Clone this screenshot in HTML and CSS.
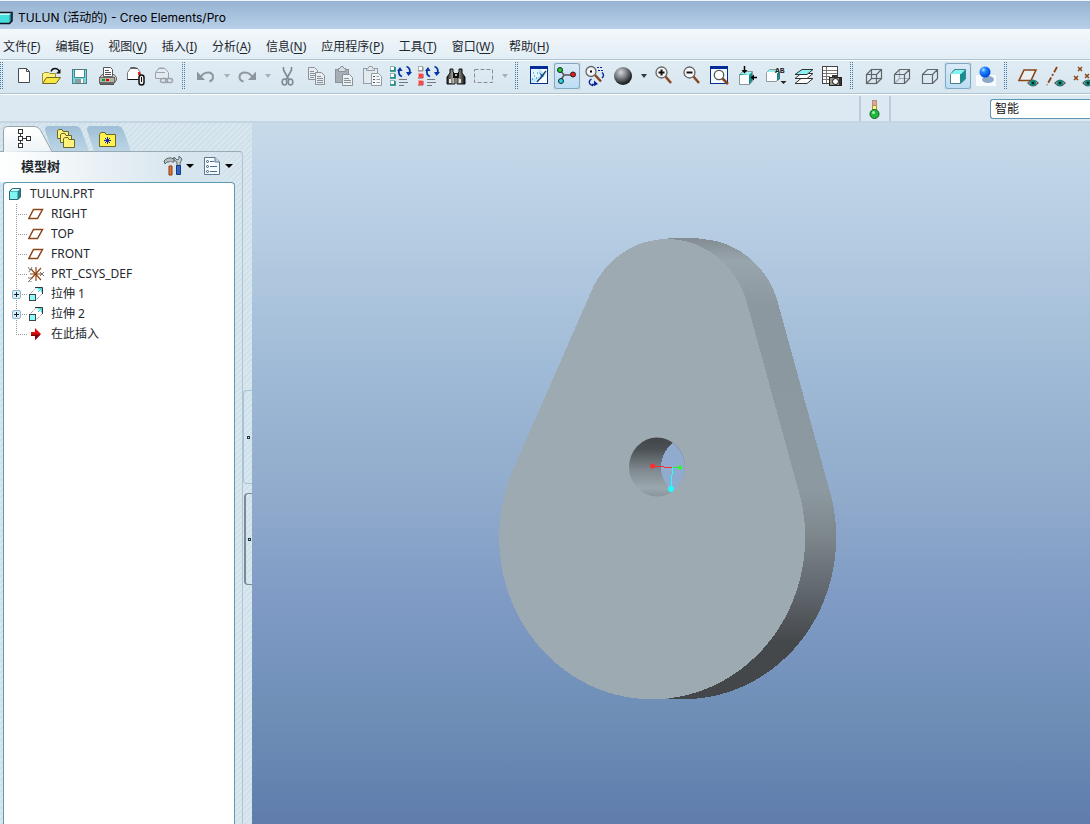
FILE: index.html
```html
<!DOCTYPE html>
<html lang="zh-CN">
<head>
<meta charset="utf-8">
<title>TULUN (活动的) - Creo Elements/Pro</title>
<link rel="stylesheet" href="styles.css">
</head>
<body>
<svg class="defs" width="0" height="0" aria-hidden="true">
  <defs>
    <radialGradient id="ball" cx=".38" cy=".3" r=".65"><stop offset="0" stop-color="#d4d7da"/><stop offset=".5" stop-color="#7c8186"/><stop offset="1" stop-color="#1d2023"/></radialGradient>
    <radialGradient id="blueball" cx=".35" cy=".3" r=".7"><stop offset="0" stop-color="#b9dcff"/><stop offset=".35" stop-color="#1c86ff"/><stop offset="1" stop-color="#0045d8"/></radialGradient>
    <linearGradient id="barrel"><stop offset="0" stop-color="#222"/><stop offset=".45" stop-color="#d8d8cc"/><stop offset="1" stop-color="#111"/></linearGradient>
    <linearGradient id="tabOn" x2="0" y2="1"><stop offset="0" stop-color="#fff"/><stop offset="1" stop-color="#edf3f7"/></linearGradient>
    <linearGradient id="tabOff" x2="0" y2="1"><stop offset="0" stop-color="#9fbfd7"/><stop offset="1" stop-color="#bcd5e5"/></linearGradient>
    <symbol id="eye" viewBox="0 0 12 8"><path d="M0 4Q6-3 12 4Q6 11 0 4" fill="#56605c"/><path d="M2 4Q6 0 10 4Q6 8 2 4" fill="#d7e8e4"/><circle cx="6" cy="4" r="3" fill="#078a80"/><circle cx="6" cy="4" r="1.3" fill="#00201e"/></symbol>
    <symbol id="plane" viewBox="0 0 16 12"><path d="M5.500 1.500H14.500L9.500 10.500H.8Z" fill="#fff" stroke="#8a4519" stroke-width="1.500"/></symbol>
    <symbol id="extrude" viewBox="0 0 16 16"><path d="M1.500 8.500L7.500 2.500M7.500 14.500L14.500 7.500" stroke="#777" stroke-dasharray="1 1" fill="none"/><path d="M7 2L10 1H14V7" fill="#b9fafa"/><path d="M7 1.500H14.500V8" fill="none" stroke="#333"/><path d="M10 6L13 3M10 2.500H13.500V6" fill="none" stroke="#48d5d5"/><rect x="1.500" y="8.500" width="6" height="6" fill="#8ff" stroke="#444"/></symbol>
    <symbol id="regen" viewBox="0 0 28 28"><path d="M16 14.500Q12 13 13 8M20.500 4.500Q25 6 23.500 12" fill="none" stroke="#0732a5" stroke-width="1.800"/><path d="M11 9L14 5L16.500 9ZM20 10L26 10L22.500 14Z" fill="#0732a5"/><path d="M13 17.500H21M13 20.500H22M13 23.500H18" stroke="#74797d"/></symbol>
    <symbol id="part" viewBox="0 0 14 14"><path d="M1 4L4 1H13V10L10 13H1Z" fill="#247f87"/><path d="M1 4L4 1H13L10 4Z" fill="#c9ffff"/><rect x="1.500" y="4.500" width="8" height="8" fill="#80f5f5"/><path d="M1.500 4.500L4.500 1.500H12.500V9.500L9.500 12.500H1.500Z" fill="none" stroke="#34676d"/></symbol>
  </defs>
</svg>

<header class="title">
  <svg class="title-icon" width="14" height="14"><path d="M-3 4L0 1H12V10L9 13H-3Z" fill="#43dede"/><path d="M-3 4L0 1H12L9 4Z" fill="#c8ffff"/><path d="M9.500 4L12 1.500V10L9.500 12.500Z" fill="#20868d"/><path d="M-1 1.500H12V10L9.500 12.500H-1" fill="none" stroke="#112" stroke-width="1.500"/></svg>
  <h1>TULUN (活动的) - Creo Elements/Pro</h1>
</header>

<nav class="menu" aria-label="菜单">
  <button>文件(<u>F</u>)</button>
  <button>编辑(<u>E</u>)</button>
  <button>视图(<u>V</u>)</button>
  <button>插入(<u>I</u>)</button>
  <button>分析(<u>A</u>)</button>
  <button>信息(<u>N</u>)</button>
  <button>应用程序(<u>P</u>)</button>
  <button>工具(<u>T</u>)</button>
  <button>窗口(<u>W</u>)</button>
  <button>帮助(<u>H</u>)</button>
</nav>

<div class="toolbar" role="toolbar" aria-label="工具栏">
  <span class="grip first"></span>
  <button class="tool" aria-label="新建"><svg viewBox="0 0 28 28"><path d="M8.500 6.500H16.500L19.500 9.500V20.500H8.500Z" fill="#fff" stroke="#454b50"/><path d="M16.500 6.500V9.500H19.500" fill="none" stroke="#454b50"/></svg></button>
  <button class="tool" aria-label="打开"><svg viewBox="0 0 28 28"><path d="M4.500 20.500V11.500H5.500L6.500 10.500H10.500L11.500 11.500H17.500V15" fill="#fff27c" stroke="#9b8d3a"/><path d="M4.500 21.500L8.500 15.500H22.500L18 21.500Z" fill="#f8e641" stroke="#6f6526"/><path d="M13 9.500Q14 6.500 17 6.500Q20 6.500 21 9" fill="none" stroke="#111" stroke-width="1.400"/><path d="M18 11.500H22.500V7Z" fill="#111"/></svg></button>
  <button class="tool" aria-label="保存"><svg viewBox="0 0 28 28"><rect x="6.500" y="7.500" width="14" height="14" fill="#6ddbe0" stroke="#4b8186"/><rect x="9" y="8" width="9" height="7" fill="#fff"/><path d="M8.500 8V15.500H18.500V8" fill="none" stroke="#49858a"/><rect x="9" y="17" width="9" height="4" fill="#8d9ba1"/><rect x="15" y="17" width="2" height="4" fill="#fff"/></svg></button>
  <button class="tool" aria-label="打印"><svg viewBox="0 0 28 28"><path d="M9.500 15V5.500H16.500L18.500 7.500V15" fill="#fff" stroke="#555"/><path d="M11 8.500H15M11 10.500H17M11 12.500H17" stroke="#555"/><path d="M5.500 15.500L8 12.500H9.500V14.500H18.500V12.500H20L22.500 15.500V18L20 21.500H5.500Z" fill="#c7c7b8" stroke="#666"/><rect x="5.500" y="15.500" width="15" height="5" fill="#b3b4a6" stroke="#666"/><rect x="8" y="17" width="3" height="2" fill="#0a9a2b"/><rect x="12" y="17" width="3" height="2" fill="#e00"/><path d="M6 22.500H20" stroke="#555"/></svg></button>
  <button class="tool" aria-label="作为附件发送"><svg viewBox="0 0 28 28"><path d="M5.500 10.500L8.500 6.500H15.500L18.500 10.500V17.500H5.500Z" fill="#fff" stroke="#777"/><path d="M8 6Q12 5 15.500 6.500" fill="none" stroke="#333"/><path d="M5.500 17.500H16" stroke="#111"/><rect x="16" y="10" width="2" height="3" fill="#e22"/><rect x="17" y="13" width="5" height="10" rx="2.500" fill="#eee" stroke="#111" stroke-width="1.500"/><path d="M19.500 15V20" stroke="#111"/></svg></button>
  <button class="tool" aria-label="作为链接发送"><svg viewBox="0 0 28 28" fill="none" stroke="#9ba4ab"><path d="M5.500 16.500V10.500L8.500 6.500H15L18.500 10.500V16.500Z" fill="#e3eaef"/><path d="M6 10.500H15M8 6.500Q12 5 15 6.500"/><rect x="10.500" y="16.500" width="7" height="4" rx="2" stroke-width="1.500"/><rect x="15.500" y="16.500" width="7" height="4" rx="2" stroke-width="1.500"/></svg></button>
  <span class="grip"></span>
  <button class="tool" aria-label="撤消"><svg viewBox="0 0 28 28"><path d="M8 16Q11 10.500 16 10.500Q21 10.500 21 15Q21 18.500 17.500 19.500" fill="none" stroke="#90989e" stroke-width="2"/><path d="M5 9.500V18H13Z" fill="#8c959b"/></svg></button>
  <button class="drop off" aria-label="撤消列表"></button>
  <button class="tool" aria-label="重做"><svg viewBox="0 0 28 28"><path d="M20 16Q17 10.500 12 10.500Q6.500 10.500 6.500 15Q6.500 18.500 10.500 19.500" fill="none" stroke="#90989e" stroke-width="2"/><path d="M23 9.500V18H15Z" fill="#8c959b"/></svg></button>
  <button class="drop off" aria-label="重做列表"></button>
  <button class="tool" aria-label="剪切"><svg viewBox="0 0 28 28" fill="none" stroke="#81898f" stroke-width="1.600"><path d="M9.500 5V8L15 18M17.500 5V8L12 18"/><ellipse cx="10.500" cy="20" rx="2.300" ry="3"/><ellipse cx="16.500" cy="20" rx="2.300" ry="3"/></svg></button>
  <button class="tool" aria-label="复制"><svg viewBox="0 0 28 28" fill="#e7edf1" stroke="#899299"><path d="M6.500 5.500H12.500L15.500 8.500V17.500H6.500Z"/><path d="M8 9.500H12M8 11.500H13M8 13.500H13M8 15.500H12"/><path d="M13.500 10.500H19.500L22.500 13.500V22.500H13.500Z"/><path d="M15 14.500H19M15 16.500H21M15 18.500H21M15 20.500H21"/></svg></button>
  <button class="tool" aria-label="粘贴"><svg viewBox="0 0 28 28" fill="#a5afb5" stroke="#899299"><rect x="5.500" y="7.500" width="13" height="13"/><path d="M8.500 9.500V6.500H10L11 4.500H13L14 6.500H15.500V9.500Z" fill="#d9e0e4"/><path d="M12.500 12.500H19.500L22.500 15.500V23.500H12.500Z" fill="#edf2f5"/><path d="M14 16.500H19M14 18.500H21M14 20.500H21" /></svg></button>
  <button class="tool" aria-label="选择性粘贴"><svg viewBox="0 0 28 28" fill="#e3eaee" stroke="#949da3"><rect x="5.500" y="6.500" width="14" height="15"/><path d="M8.500 8.500V6.500H10L11 4.500H14L15 6.500H16.500V8.500Z"/><path d="M13.500 11.500H20.500L23.500 14.500V23.500H13.500Z" fill="#f4f7f9"/><path d="M15 14.500H17M15 17.500H17M15 20.500H17" stroke="#555"/><path d="M18.500 14.500H21M18.500 17.500H22M18.500 20.500H22"/></svg></button>
  <button class="tool" aria-label="再生"><svg viewBox="0 0 28 28"><g fill="#fff" stroke="#8fb5b8"><rect x="4.500" y="4.500" width="4" height="4"/><rect x="4.500" y="11.500" width="4" height="4"/><rect x="4.500" y="18.500" width="4" height="4"/></g><path d="M4 9H9V5M4 16H9V12M4 23H9V19" fill="none" stroke="#138581" stroke-width="1.600"/><use href="#regen"/></svg></button>
  <button class="tool" aria-label="再生管理器"><svg viewBox="0 0 28 28"><rect x="4.500" y="4.500" width="4" height="4" fill="#fff" stroke="#aaa"/><g fill="#ff4040" stroke="#f7a0a0"><rect x="4.500" y="11.500" width="4" height="4"/><rect x="4.500" y="18.500" width="4" height="4"/></g><path d="M4 9H9V5" fill="none" stroke="#888"/><path d="M4 16H9V12M4 23H9V19" fill="none" stroke="#b92d2d"/><use href="#regen"/></svg></button>
  <button class="tool" aria-label="查找"><svg viewBox="0 0 28 28"><path d="M8 7H11V10L13 12V22H5V15L8 11ZM17 7H20V11L23 15V22H15V12L17 10Z" fill="url(#barrel)" stroke="#111"/><rect x="11" y="11" width="6" height="5" fill="#111"/><rect x="13" y="12" width="2" height="2" fill="#bbb"/><path d="M8 17V21M18 17V21" stroke="#e4e4d9" stroke-width="2"/></svg></button>
  <button class="tool" aria-label="选择框"><svg viewBox="0 0 28 28"><rect x="4.500" y="7.500" width="18" height="13" fill="none" stroke="#858d93" stroke-dasharray="4 2"/></svg></button>
  <button class="drop off" aria-label="选择列表"></button>
  <span class="grip"></span>
  <button class="tool" aria-label="重画"><svg viewBox="0 0 28 28"><rect x="5.500" y="4.500" width="17" height="17" fill="#fff" stroke="#082d91"/><rect x="5" y="4" width="18" height="3" fill="#052b96"/><path d="M6 7H15L21 13L12 20L6 21Z" fill="#bfe8fb"/><path d="M6 7H13L16 12L12 16L6 17Z" fill="#e3f6fd"/><path d="M14 10L19 14L12 19L17 16Z" fill="#1967bd"/><path d="M21 9L15.500 16L12 20" stroke="#23406e" stroke-width="1.400" fill="none"/><path d="M8 11H9M12 11H13M9 14H10M7 17H8M11 16H12" stroke="#0873bb"/></svg></button>
  <button class="tool on" aria-label="旋转中心"><svg viewBox="0 0 28 28" stroke="#222"><path d="M7 8L11 13M11 13L8 18M11 13H19" fill="none" stroke="#555" stroke-width="1.500"/><circle cx="7" cy="8" r="2.500" fill="#19d22b"/><circle cx="8" cy="19" r="2.500" fill="#27d9e2"/><circle cx="20" cy="12.500" r="2.500" fill="#f21919"/></svg></button>
  <button class="tool" aria-label="定向模式"><svg viewBox="0 0 28 28"><path d="M14 13L20 19.500" stroke="#8a4420" stroke-width="2.500"/><circle cx="10" cy="9.500" r="5" fill="#f1f5f8" stroke="#666" stroke-width="1.300"/><rect x="9" y="8.500" width="2" height="2" fill="#000"/><path d="M16 5.500H22M17 8.500H22" stroke="#08239c" stroke-dasharray="2 1"/><path d="M21 10.500Q24 13 21 16M10.500 17Q7 19 9 22L12 24M14.500 22.500H11" fill="none" stroke="#08239c" stroke-width="1.400"/><path d="M13 18.500V24L17 22Z" fill="#08239c"/></svg></button>
  <button class="tool" aria-label="外观库"><svg viewBox="0 0 28 28"><circle cx="14" cy="14" r="9" fill="url(#ball)"/></svg></button>
  <button class="drop" aria-label="外观列表"></button>
  <button class="tool" aria-label="放大"><svg viewBox="0 0 28 28"><path d="M15 14L21 21" stroke="#8a4420" stroke-width="2.500"/><circle cx="11.500" cy="10.500" r="5.500" fill="#f6f8f9" stroke="#666" stroke-width="1.300"/><path d="M8.500 10.500H14.500M11.500 7.500V13.500" stroke="#111" stroke-width="2"/></svg></button>
  <button class="tool" aria-label="缩小"><svg viewBox="0 0 28 28"><path d="M15 14L21 21" stroke="#8a4420" stroke-width="2.500"/><circle cx="11.500" cy="10.500" r="5.500" fill="#f6f8f9" stroke="#666" stroke-width="1.300"/><path d="M8.500 10.500H14.500" stroke="#111" stroke-width="2"/></svg></button>
  <button class="tool" aria-label="重新调整"><svg viewBox="0 0 28 28"><rect x="4.500" y="4.500" width="17" height="17" fill="#f4fbff" stroke="#082d91"/><rect x="4" y="4" width="18" height="3" fill="#052b96"/><path d="M16 16L22 22" stroke="#8a4420" stroke-width="2.500"/><circle cx="13" cy="13" r="4.700" fill="#fff" stroke="#555" stroke-width="1.300"/></svg></button>
  <button class="tool" aria-label="重定向"><svg viewBox="0 0 28 28"><path d="M5.500 12.500L8.500 9.500H18.500V19L15.500 22.500H5.500Z" fill="#188b8b" stroke="#8a989c"/><path d="M6 13H15V22H6Z" fill="#fff"/><path d="M6 12L9 10H18L15 13Z" fill="#a5f5f5"/><path d="M10.500 4V9M19 15.500H23" stroke="#000" stroke-width="1.500"/><path d="M7.500 8H13.500L10.500 11.500ZM20 12.500V18.500L16.500 15.500Z" fill="#000"/></svg></button>
  <button class="tool" aria-label="保存的视图列表"><svg viewBox="0 0 28 28"><path d="M4.500 10.500L7.500 7.500H16.500V16L14.500 19.500H4.500Z" fill="#fff" stroke="#8d999d"/><path d="M5 10L8 8H16L14 10Z" fill="#8ceeee"/><path d="M15 11H18V17L15 19Z" fill="#278484"/><text x="13" y="11" class="tiny">AB</text><path d="M18.500 19H24.500L21.500 22Z" fill="#222"/></svg></button>
  <button class="tool" aria-label="层"><svg viewBox="0 0 28 28" fill="#fff" stroke="#333" stroke-linejoin="round"><path d="M5 21.500L11 16.500H23L17 21.500Z"/><path d="M5 16.500L11 11.500H23L17 16.500Z"/><path d="M5 12.500L12 7.500H23L17 12.500Z" fill="#8af2f2"/></svg></button>
  <button class="tool" aria-label="视图管理器"><svg viewBox="0 0 28 28"><rect x="4.500" y="4.500" width="15" height="17" fill="#fff" stroke="#444"/><path d="M5 8.500H19M5 11.500H19M5 14.500H12M5 17.500H12M8.500 5V21" stroke="#777"/><rect x="11.500" y="15.500" width="12" height="8" fill="#999986" stroke="#222"/><rect x="14" y="13" width="5" height="3" fill="#333"/><circle cx="17.500" cy="19.500" r="3" fill="#fff" stroke="#111"/><rect x="21" y="16" width="2" height="7" fill="#333"/></svg></button>
  <span class="grip"></span>
  <button class="tool" aria-label="线框"><svg viewBox="0 0 28 28" fill="none" stroke="#5f6569" stroke-width="1.200"><rect x="6.500" y="12.500" width="10" height="9"/><rect x="11.500" y="7.500" width="10" height="9"/><path d="M6.500 12.500L11.500 7.500M16.500 12.500L21.500 7.500M6.500 21.500L11.500 16.500M16.500 21.500L21.500 16.500"/></svg></button>
  <button class="tool" aria-label="隐藏线"><svg viewBox="0 0 28 28" fill="none" stroke="#5f6569" stroke-width="1.200"><path d="M11.500 7.500V16.500H21.500M6.500 21.500L11.500 16.500" stroke="#a4abb0"/><path d="M6.500 12.500H16.500V21.500H6.500ZM6.500 12.500L11.500 7.500H21.500V16.500L16.500 21.500M16.500 12.500L21.500 7.500"/></svg></button>
  <button class="tool" aria-label="消隐"><svg viewBox="0 0 28 28" fill="none" stroke="#5f6569" stroke-width="1.200"><path d="M6.500 12.500H16.500V21.500H6.500ZM6.500 12.500L11.500 7.500H21.500V16.500L16.500 21.500M16.500 12.500L21.500 7.500"/></svg></button>
  <button class="tool on" aria-label="着色"><svg viewBox="0 0 28 28"><path d="M6.500 12.500L10.500 7.500H21.500V17L16.500 21.500H6.500Z" fill="#168e91" stroke="#4f8286"/><path d="M7 12L11 8H21L17 12Z" fill="#83f3f3"/><rect x="7" y="12" width="9" height="9" fill="#fff"/></svg></button>
  <button class="tool" aria-label="增强的真实感"><svg viewBox="0 0 28 28"><rect x="4" y="13" width="20" height="11" fill="#f8fbfd"/><ellipse cx="16" cy="17.500" rx="6" ry="3.500" fill="#8ba8ca"/><circle cx="13" cy="10" r="5.500" fill="url(#blueball)"/></svg></button>
  <span class="grip"></span>
  <button class="tool" aria-label="平面显示"><svg viewBox="0 0 28 28"><path d="M10 8H22L17 18.500H5Z" fill="#e9f0f4" stroke="#8a4519" stroke-width="1.600"/><use href="#eye" x="13" y="17" width="12" height="8"/></svg></button>
  <button class="tool" aria-label="轴显示"><svg viewBox="0 0 28 28"><path d="M15 5L5 23" fill="none" stroke="#8a4519" stroke-width="1.800" stroke-dasharray="6 2 2 2"/><use href="#eye" x="12" y="17" width="12" height="8"/></svg></button>
  <button class="tool" aria-label="点显示"><svg viewBox="0 0 28 28"><path d="M8 5L12 9M12 5L8 9M4 14L8 18M8 14L4 18M15 12L19 16M19 12L15 16" stroke="#8a4519" stroke-width="1.500"/><use href="#eye" x="12" y="17" width="12" height="8"/></svg></button>
</div>

<div class="statusbar">
  <div class="lamp">
    <svg width="14" height="22" viewBox="0 0 14 22"><rect x="4.500" y="2.500" width="4" height="5" fill="#f29b9b" stroke="#a9957c"/><rect x="4.500" y="7.500" width="4" height="5" fill="#fff38d" stroke="#a89835"/><circle cx="6.500" cy="16" r="4.500" fill="#20b83c" stroke="#155c22"/><circle cx="5.500" cy="14.500" r="1.500" fill="#a5f3ad"/></svg>
  </div>
  <select class="filter" aria-label="选择过滤器"><option>智能</option></select>
</div>

<main class="work">
  <aside class="side">
    <div class="tabs">
      <button class="tab one" aria-label="模型树"><svg width="50" height="26" viewBox="0 0 50 26"><path d="M.5 26V4Q.5 .5 4 .5H31Q36 .5 39 7L49 25.500" fill="url(#tabOn)" stroke="#98a4ac"/><path d="M17.500 7V17M17.500 12.500H24" stroke="#333"/><g fill="#fff" stroke="#333"><rect x="15.500" y="3.500" width="4" height="4"/><rect x="15.500" y="10.500" width="4" height="4"/><rect x="15.500" y="17.500" width="4" height="4"/><rect x="23.500" y="10.500" width="4" height="4"/></g></svg></button>
      <button class="tab" aria-label="文件夹浏览器"><svg width="46" height="26" viewBox="0 0 46 26"><path d="M0 4Q0 0 3 0H31Q35 0 37 6L44 25H7Z" fill="url(#tabOff)"/><g fill="#fff27a" stroke="#6c6628"><path d="M12.500 12.500V4.500L14 3.500H17L18 5.500H23.500V12.500Z"/><path d="M15.500 16.500V8.500L17 7.500H20L21 9.500H26.500V16.500Z"/><path d="M18.500 21.500V12.500L20 11.500H23L24 13.500H29.500V21.500Z"/></g></svg></button>
      <button class="tab" aria-label="收藏夹"><svg width="46" height="26" viewBox="0 0 46 26"><path d="M0 4Q0 0 3 0H31Q35 0 37 6L44 25H7Z" fill="url(#tabOff)"/><path d="M12.500 20.500V8.500L14 6.500H18L19 8.500H28.500V20.500Z" fill="#fff24a" stroke="#6c6628"/><path d="M20.500 11V18M17 14.500H24M18 12L23 17M23 12L18 17" stroke="#1525ad"/></svg></button>
    </div>
    <div class="frame">
      <section class="panel">
        <div class="panel-head">
          <h2>模型树</h2>
          <button class="head-tool" aria-label="设置"><svg width="20" height="22" viewBox="0 0 20 22"><path d="M1 6Q5 1 11 4V7H4L2 9Z" fill="#b6c0c3" stroke="#566" /><path d="M6 7H9V11H6Z" fill="#ddd"/><path d="M6 11H9V20H6Z" fill="#e0773a" stroke="#8a3a16"/><path d="M11 2L14 5L16 4V1L19 4L17 8V11H14V7L11 5Z" fill="#c9d2d4" stroke="#566"/><path d="M13.500 10.500H17.500V19.500H13.500Z" fill="#3164cb" stroke="#1b367a"/></svg></button>
          <button class="drop" aria-label="设置列表"></button>
          <button class="head-tool" aria-label="显示"><svg width="20" height="22" viewBox="0 0 20 22"><path d="M2.500 2.500H13L17.500 7V19.500H2.500Z" fill="#f5faff" stroke="#5c7891"/><path d="M13 2.500V7H17.500" fill="#c4d8e8" stroke="#5c7891"/><path d="M8 6.500H12M8 11.500H15M8 16.500H15" stroke="#4a7096"/><g fill="#fff" stroke="#3c566c"><circle cx="5.500" cy="6.500" r="1"/><circle cx="5.500" cy="11.500" r="1"/><circle cx="5.500" cy="16.500" r="1"/></g></svg></button>
          <button class="drop" aria-label="显示列表"></button>
        </div>
        <div class="tree">
          <div class="root"><svg width="14" height="14"><use href="#part"/></svg>TULUN.PRT</div>
          <ul>
            <li><span class="link"></span><svg class="node" width="16" height="12"><use href="#plane"/></svg>RIGHT</li>
            <li><span class="link"></span><svg class="node" width="16" height="12"><use href="#plane"/></svg>TOP</li>
            <li><span class="link"></span><svg class="node" width="16" height="12"><use href="#plane"/></svg>FRONT</li>
            <li><span class="link"></span><svg class="node" width="16" height="16" viewBox="0 0 16 16"><path d="M2 8H14M8 1V15M3 3L13 14M13 2L3 13" stroke="#914717" stroke-width="1.200"/><path d="M0 1L2 4M4 1L1 6M12 6L16 10M16 6L12 10M0 12H4L0 16H4" fill="none" stroke="#777"/></svg>PRT_CSYS_DEF</li>
            <li><span class="link"><button class="plus" aria-label="展开 拉伸 1"></button></span><svg class="node" width="16" height="16"><use href="#extrude"/></svg>拉伸 1</li>
            <li><span class="link"><button class="plus" aria-label="展开 拉伸 2"></button></span><svg class="node" width="16" height="16"><use href="#extrude"/></svg>拉伸 2</li>
            <li><span class="link last"></span><svg class="node" width="16" height="12"><path d="M3 4H7V0L13 6L7 12V8H3Z" fill="#e20b0b"/><path d="M3 6.500H12.500L7 12V8H3Z" fill="#7a0808"/></svg>在此插入</li>
          </ul>
        </div>
      </section>
      <div class="splitter">
        <button class="handle" aria-label="折叠导航器"></button>
        <button class="handle dark" aria-label="展开浏览器"></button>
      </div>
    </div>
  </aside>

  <section class="view" aria-label="图形窗口">
    <svg viewBox="252 123 838 701" preserveAspectRatio="xMinYMin slice" role="img" aria-label="凸轮模型">
      <defs>
        <linearGradient id="edge" gradientUnits="userSpaceOnUse" x1="0" y1="238" x2="0" y2="697">
          <stop offset="0" stop-color="#828c92"/><stop offset=".05" stop-color="#99a5ac"/><stop offset=".15" stop-color="#8c989f"/><stop offset=".55" stop-color="#8d99a0"/><stop offset=".65" stop-color="#7c868b"/><stop offset=".78" stop-color="#5e646b"/><stop offset=".88" stop-color="#45484b"/><stop offset="1" stop-color="#434749"/>
        </linearGradient>
        <linearGradient id="bore" x2="0" y2="1"><stop offset="0" stop-color="#414548"/><stop offset=".2" stop-color="#4b5054"/><stop offset=".55" stop-color="#7f898f"/><stop offset=".85" stop-color="#9ba7ae"/><stop offset="1" stop-color="#88939a"/></linearGradient>
        <clipPath id="hole"><ellipse cx="657" cy="467" rx="28" ry="29.500"/></clipPath>
      </defs>
      <g shape-rendering="crispEdges">
        <g fill="url(#edge)">
          <path transform="translate(31 0)" d="M591 292A83 88 0 0 1 747 303L797 485A153 162 0 1 1 513 470Z"/>
          <path d="M668 238H699V300H668ZM652 650H684V697H652Z"/>
        </g>
        <path d="M591 292A83 88 0 0 1 747 303L797 485A153 162 0 1 1 513 470Z" fill="#9eaab2"/>
        <g clip-path="url(#hole)">
          <rect x="629" y="437" width="56" height="60" fill="url(#bore)"/>
          <ellipse cx="689" cy="467" rx="28" ry="29.500" fill="#91abcf"/>
        </g>
      </g>
      <path d="M652 466.500H664M664 467.500H672" stroke="#ff2c2c" fill="none"/>
      <path d="M673 467.500H679" stroke="#2ee83b"/>
      <path d="M672.500 467V475M671.500 475V489" stroke="#2ff" fill="none"/>
      <circle cx="652.500" cy="466" r="2.500" fill="#ff2f2f"/>
      <circle cx="680" cy="467.500" r="2.200" fill="#3bf03b"/>
      <circle cx="671" cy="489" r="3" fill="#25fbff"/>
    </svg>
  </section>
</main>
</body>
</html>
```
FILE: styles.css
```css
*, *::before { box-sizing: border-box; }

html, body { height: 100%; }

body {
  margin: 0;
  display: flex;
  flex-direction: column;
  overflow: hidden;
  background: #dce9f2;
  color: #23282d;
  font-family: "Noto Sans", "Noto Sans CJK SC", sans-serif;
  font-size: 12px;
  line-height: 20px;
}

button {
  margin: 0;
  padding: 0;
  border: 0;
  background: none;
  color: inherit;
  font: inherit;
}

h1, h2, ul { margin: 0; padding: 0; }

svg { display: block; flex: none; }

.defs { position: absolute; }

.title {
  display: flex;
  align-items: center;
  gap: 4px;
  height: 29px;
  padding-top: 6px;
  border-top: 1px solid #eef4fa;
  background: linear-gradient(#97b3d1, #b7cfe9);
}

.title h1 {
  font-family: Inter, "Noto Sans CJK SC", sans-serif;
  font-size: 12px;
  font-weight: normal;
  color: #000;
  white-space: nowrap;
}

.menu {
  display: flex;
  flex: none;
  gap: 15px;
  height: 31px;
  padding: 8px 3px 0;
  border-bottom: 1px solid #adc4d3;
  background: linear-gradient(#f3f8fc, #e2edf5);
}

.menu button { height: 20px; white-space: nowrap; }

.menu u { text-underline-offset: 2px; }

.toolbar {
  display: flex;
  flex: none;
  height: 34px;
  padding-top: 1px;
  border-top: 1px solid #fff;
  border-bottom: 1px solid #adc4d3;
  background: linear-gradient(#e0ecf4, #d8e6ef);
}

.grip {
  flex: none;
  width: 14px;
  height: 28px;
  padding-left: 4px;
}

.grip.first { width: 10px; padding-left: 0; }

.grip::before {
  content: "";
  display: block;
  width: 3px;
  height: 28px;
  background: conic-gradient(#487da9 25%, transparent 0) 1px 0 / 2px 2px;
}

.tool {
  flex: none;
  width: 28px;
  height: 28px;
}

.tool svg { width: 28px; height: 28px; }

.tool.on {
  border-radius: 4px;
  background: linear-gradient(#dcecf8, #b9dcf5);
  box-shadow: inset 0 0 0 1px #d8e6ef, inset 0 0 0 2px #83a7c0;
}

.drop {
  display: flex;
  flex: none;
  align-items: center;
  justify-content: center;
  width: 13px;
  height: 28px;
  color: #303a42;
}

.drop.off { color: #a8b0b6; }

.drop::before {
  content: "";
  border: 3px solid transparent;
  border-top: 4px solid currentColor;
  border-bottom: 0;
}

.tiny { font: bold 8px "Liberation Mono", monospace; fill: #222; }

.statusbar {
  display: flex;
  flex: none;
  justify-content: flex-end;
  align-items: center;
  gap: 99px;
  height: 29px;
  padding-top: 1px;
  border-top: 1px solid #fff;
  border-bottom: 2px solid #c5d6e2;
  background: #dce9f2;
}

.lamp {
  display: flex;
  align-items: center;
  justify-content: center;
  width: 32px;
  height: 25px;
  border-left: 2px solid #becddb;
  border-right: 2px solid #becddb;
}

.filter {
  appearance: none;
  width: 100px;
  height: 20px;
  margin: 0;
  padding: 0 4px;
  border: 1px solid #5e97b1;
  border-right: 0;
  border-radius: 3px 0 0 3px;
  background: #fff;
  color: #111;
  font: inherit;
  line-height: 18px;
}

.work { display: flex; flex: 1; min-height: 0; }

.side {
  display: flex;
  flex: none;
  flex-direction: column;
  width: 252px;
  padding-top: 3px;
  background: repeating-linear-gradient(135deg, #d1e1eb 0 2px, #d9e7ef 2px 4px);
}

.tabs { display: flex; height: 25px; padding-left: 3px; }

.tab { width: 42px; height: 25px; }

.tab.one { z-index: 1; }

.tab svg { overflow: visible; }

.frame { display: flex; flex: 1; min-height: 0; }

.panel {
  display: flex;
  flex-direction: column;
  width: 243px;
  padding: 0 7px 0 3px;
  border-top: 1px solid #9aabb6;
  border-right: 1px solid #b3c4d0;
  border-radius: 0 4px 0 0;
  background: linear-gradient(90deg, #fff, #d7e5ee 75%, transparent) 0 0 / 100% 30px no-repeat;
}

.panel-head {
  display: flex;
  flex: none;
  align-items: center;
  height: 30px;
  padding: 0 0 2px 18px;
}

.panel-head h2 { flex: 1; font-size: 13px; line-height: 20px; }

.head-tool { margin-left: 6px; }

.panel-head .drop { color: #000; }

.panel-head .drop::before { border-width: 4px 4px 0; }

.tree {
  flex: 1;
  border: 1px solid #5f99b2;
  border-bottom: 0;
  border-radius: 4px 4px 0 0;
  background: #fff;
}

.root { display: flex; align-items: center; gap: 8px; height: 21px; padding-left: 4px; }

.tree ul { list-style: none; }

.tree li { display: flex; align-items: center; height: 20px; white-space: nowrap; }

.node { margin-right: 7px; }

.link {
  display: flex;
  align-items: center;
  width: 24px;
  height: 20px;
  padding-left: 8px;
  background:
    repeating-linear-gradient(#999 0 1px, transparent 1px 2px) 12px 0 / 1px 100% no-repeat,
    repeating-linear-gradient(90deg, #999 0 1px, transparent 1px 2px) 12px 10px / 12px 1px no-repeat;
}

.link.last {
  background:
    repeating-linear-gradient(#999 0 1px, transparent 1px 2px) 12px 0 / 1px 10px no-repeat,
    repeating-linear-gradient(90deg, #999 0 1px, transparent 1px 2px) 12px 10px / 12px 1px no-repeat;
}

.plus {
  width: 9px;
  height: 9px;
  border: 1px solid #90b5cd;
  border-radius: 2px;
  background:
    linear-gradient(#123, #123) center / 5px 1px no-repeat,
    linear-gradient(#123, #123) center / 1px 5px no-repeat,
    #d9edf8;
}

.splitter {
  display: flex;
  flex: 1;
  flex-direction: column;
  align-items: flex-end;
  gap: 9px;
  padding-top: 239px;
}

.handle {
  display: flex;
  align-items: center;
  justify-content: center;
  width: 9px;
  height: 94px;
  border: 1px solid #a5c3d7;
  border-right: 0;
  border-radius: 4px 0 0 4px;
}

.handle.dark { width: 8px; height: 92px; border: 1px solid #788b97; border-left-width: 2px; border-right: 0; }

.handle::before {
  content: "";
  width: 3px;
  height: 3px;
  border: 1px solid #26343d;
}

.view {
  flex: 1;
  min-width: 0;
  background: linear-gradient(#c6daea, #b8cee3 14%, #9fbad6 36%, #8faacb 54%, #7f9bc5 68%, #6e8eb6 85%, #5f7cab);
}

.view svg { width: 100%; height: 100%; }
```
